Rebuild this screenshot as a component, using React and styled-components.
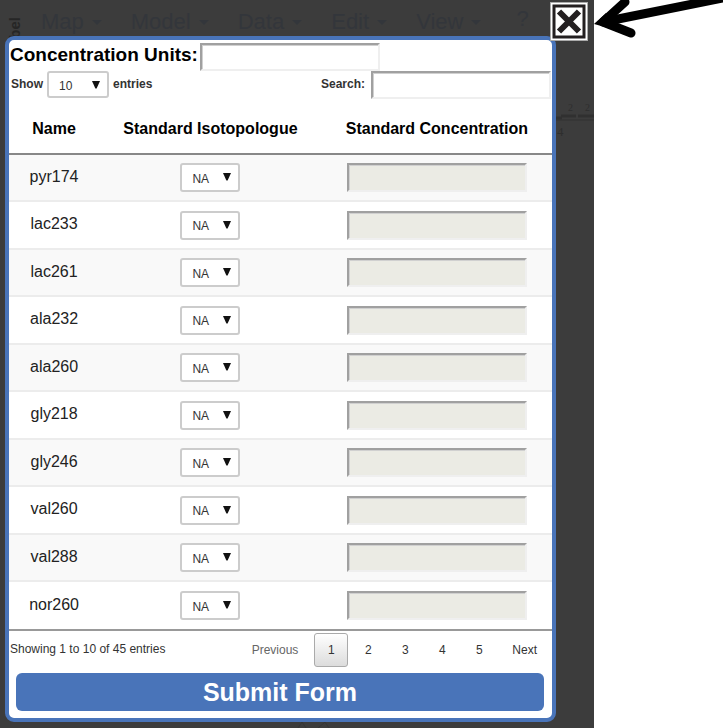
import React, { useState } from "react";
import styled, { createGlobalStyle } from "styled-components";

const GlobalStyle = createGlobalStyle`
  * { box-sizing: border-box; }
  body {
    margin: 0;
    background: #fff;
    color: #222;
    font-family: "Liberation Sans", Arial, sans-serif;
  }
  button, input, select { font-family: inherit; margin: 0; }
`;

const Page = styled.div`
  position: relative;
  display: grid;
  grid-template-columns: minmax(0, 1fr) 129px;
  min-height: 100vh;
`;

const Backdrop = styled.div`
  position: relative;
  background: #3c3c3c;
  padding: 0 38px 6px 5px;
`;

const MenuBar = styled.nav`
  display: flex;
  align-items: flex-end;
  height: 36px;
  color: #33363b;
`;

const SideLabel = styled.span`
  align-self: flex-start;
  writing-mode: vertical-rl;
  transform: rotate(180deg);
  width: 20px;
  margin: 17px 16px 0 0;
  font-size: 15px;
  font-weight: bold;
  line-height: 20px;
  color: #262626;
`;

const MenuButton = styled.button`
  display: flex;
  align-items: center;
  gap: 8px;
  height: 28px;
  margin-right: 29px;
  padding: 0;
  border: 0;
  background: none;
  color: inherit;
  font-size: 22px;
  line-height: 28px;

  &:last-child {
    height: 34px;
    margin: 0 0 0 6px;
  }
`;

const Caret = styled.i`
  border: 5px solid transparent;
  border-top-color: currentColor;
  border-bottom: 0;
`;

const MapFragment = styled.svg`
  position: absolute;
  top: 98px;
  right: 0;
`;

const BottomMark = styled.svg`
  position: absolute;
  bottom: 0;
  left: 296px;
`;

const Dialog = styled.form`
  position: relative;
  border: 4px solid #4974b9;
  border-radius: 9px;
  background: #fff;
`;

const CloseButton = styled.button`
  position: absolute;
  top: -38px;
  right: -36px;
  width: 38px;
  height: 39px;
  padding: 0;
  border: 0;
  background: none;
  svg { display: block; }
`;

const UnitsRow = styled.div`
  display: flex;
  align-items: center;
  gap: 2px;
  height: 31px;
  padding: 2px 0 0 1px;
`;

const UnitsLabel = styled.label`
  color: #000;
  font-size: 19px;
  font-weight: bold;
  line-height: 24px;
  padding-bottom: 4px;
`;

const TextField = styled.input`
  width: 180px;
  height: ${(p) => p.$height || 28}px;
  padding: 0 6px;
  border: 2px solid;
  border-color: #a0a0a0 #efefef #efefef #a0a0a0;
  border-radius: 0;
  background: ${(p) => (p.disabled ? "#ebebe4" : "#fff")};
  box-shadow: inset 1px 1px #d0d0d0;
  font-size: 13px;
  outline: 0;
`;

const ControlRow = styled.div`
  display: flex;
  justify-content: space-between;
  height: 27px;
  padding: 0 1px 0 2px;
  font-size: 12px;
  font-weight: bold;
  line-height: 27px;
  color: #333;
`;

const ControlLabel = styled.label`
  display: flex;
  gap: ${(p) => p.$gap}px;
`;

const SelectBox = styled.span`
  position: relative;
  display: inline-block;
  vertical-align: top;
  width: ${(p) => p.$width}px;
  height: ${(p) => p.$height}px;
  svg {
    position: absolute;
    top: 9px;
    right: 9px;
    pointer-events: none;
  }
`;

const Select = styled.select`
  appearance: none;
  display: block;
  width: 100%;
  height: 100%;
  padding: 2px 20px 0 10px;
  border: 2px solid #ccc;
  border-radius: 3px;
  background: #fff;
  color: #333;
  font-size: 12px;
`;

const Table = styled.table`
  width: 100%;
  table-layout: fixed;
  border-collapse: separate;
  border-spacing: 0;
  border-bottom: 2px solid #999;
  color: #000;
  text-align: center;
`;

const HeadCell = styled.th`
  width: ${(p) => p.$width};
  height: 57px;
  padding: 7px 0 0;
  border-bottom: 2px solid #888;
  font-size: 16px;
  line-height: 20px;
  white-space: nowrap;
`;

const Row = styled.tr`
  height: 47px;
  &:nth-child(odd) { background: #f9f9f9; }
  &:nth-child(even):not(:last-child) { height: 48px; }
  &:not(:last-child) td { border-bottom: 2px solid #ececec; }
`;

const Cell = styled.td`
  padding: 0;
  color: #222;
  font-size: 16px;
  line-height: 20px;
  vertical-align: middle;
`;

const NameCell = styled(Cell)`
  padding-bottom: 2px;
`;

const ControlCell = styled(Cell)`
  input { display: block; margin: 0 auto; }
`;

const Footer = styled.div`
  display: flex;
  justify-content: space-between;
  align-items: center;
  padding: 2px 2px 6px 1px;
  font-size: 12px;
  color: #333;
`;

const Status = styled.span`
  padding-bottom: 2px;
`;

const Pager = styled.div`
  display: flex;
  gap: 3px;
`;

const PageButton = styled.button`
  min-width: 34px;
  height: 34px;
  padding: 0 12px;
  border: 1px solid ${(p) => (p.$current ? "#aaa" : "transparent")};
  border-radius: 3px;
  background: ${(p) => (p.$current ? "linear-gradient(#fff, #dcdcdc)" : "none")};
  color: ${(p) => (p.disabled ? "#666" : "#333")};
  font-size: 12px;
`;

const SubmitBar = styled.div`
  padding: 0 8px 7px 7px;
`;

const Submit = styled.button`
  display: block;
  width: 100%;
  height: 38px;
  padding: 0;
  border: 0;
  border-radius: 6px;
  background: #4974b9;
  color: #fff;
  font-size: 25px;
  font-weight: bold;
  line-height: 36px;
`;

const Pointer = styled.svg`
  position: absolute;
  top: 0;
  right: 0;
  pointer-events: none;
`;

const menus = ["Map", "Model", "Data", "Edit", "View"];
const names = [
  "pyr174", "lac233", "lac261", "ala232", "ala260",
  "gly218", "gly246", "val260", "val288", "nor260",
];

function DropDown({ id, label, width, height, options }) {
  return (
    <SelectBox $width={width} $height={height}>
      <Select id={id} aria-label={label}>
        {options.map((o) => <option key={o}>{o}</option>)}
      </Select>
      <svg width="8" height="9" viewBox="0 0 8 9" aria-hidden="true">
        <path d="M0 1h8L4.6 8.5H3.4z" fill="#111" />
      </svg>
    </SelectBox>
  );
}

export default function App() {
  const [page, setPage] = useState(1);
  return (
    <Page>
      <GlobalStyle />
      <Backdrop>
        <MenuBar>
          <SideLabel>bel</SideLabel>
          {menus.map((name) => (
            <MenuButton key={name} type="button">
              {name}<Caret />
            </MenuButton>
          ))}
          <MenuButton type="button" aria-label="Help">?</MenuButton>
        </MenuBar>
        <MapFragment width="38" height="40" aria-hidden="true">
          <path d="M0 20H6M5 18h15M22 18h16" stroke="#303030" strokeWidth="3" />
          <path d="M0 22H38" stroke="#303030" strokeWidth="1" />
          <g fill="#2e2e2e" fontFamily="Liberation Serif, serif">
            <text x="12" y="13" fontSize="10">2</text>
            <text x="29" y="13" fontSize="10">2</text>
            <text x="1" y="38" fontSize="13">4</text>
          </g>
        </MapFragment>
        <BottomMark width="34" height="6" aria-hidden="true">
          <path d="M2 6 6 0M10 6 6 0M22 6 29 0 33 6" stroke="#353535" fill="none" />
        </BottomMark>
        <Dialog onSubmit={(e) => e.preventDefault()}>
          <CloseButton type="button" aria-label="Close">
            <svg width="38" height="39" viewBox="0 0 38 39">
              <path d="M0 0h38v39H0z" fill="#aaa" />
              <path d="M1 1h36v37H1z" fill="#fff" />
              <path d="M4 4h30v31H4z" fill="#fff" stroke="#231f20" strokeWidth="3" />
              <path d="M9 9.500 29 29.500M29 9.500 9 29.500" stroke="#231f20" strokeWidth="6" />
            </svg>
          </CloseButton>
          <UnitsRow>
            <UnitsLabel htmlFor="units">Concentration Units:</UnitsLabel>
            <TextField id="units" />
          </UnitsRow>
          <ControlRow>
            <ControlLabel $gap={4} htmlFor="length">
              <span>Show</span>
              <DropDown id="length" width={62} height={27} options={["10", "25", "50"]} />
              <span>entries</span>
            </ControlLabel>
            <ControlLabel $gap={6}>
              Search:
              <TextField type="search" />
            </ControlLabel>
          </ControlRow>
          <Table>
            <thead>
              <tr>
                <HeadCell $width="16.6%">Name</HeadCell>
                <HeadCell $width="41%">Standard Isotopologue</HeadCell>
                <HeadCell>Standard Concentration</HeadCell>
              </tr>
            </thead>
            <tbody>
              {names.map((name) => (
                <Row key={name}>
                  <NameCell>{name}</NameCell>
                  <ControlCell>
                    <DropDown label={`${name} standard isotopologue`} width={60} height={29} options={["NA"]} />
                  </ControlCell>
                  <ControlCell>
                    <TextField $height={29} disabled aria-label={`${name} standard concentration`} />
                  </ControlCell>
                </Row>
              ))}
            </tbody>
          </Table>
          <Footer>
            <Status>Showing 1 to 10 of 45 entries</Status>
            <Pager>
              <PageButton type="button" disabled={page === 1} onClick={() => setPage(page - 1)}>Previous</PageButton>
              {[1, 2, 3, 4, 5].map((n) => (
                <PageButton key={n} type="button" $current={n === page} onClick={() => setPage(n)}>{n}</PageButton>
              ))}
              <PageButton type="button" disabled={page === 5} onClick={() => setPage(page + 1)}>Next</PageButton>
            </Pager>
          </Footer>
          <SubmitBar>
            <Submit type="submit">Submit Form</Submit>
          </SubmitBar>
        </Dialog>
      </Backdrop>
      <Pointer width="131" height="40" viewBox="592 0 131 40" aria-hidden="true">
        <path d="M728 -3 603 22" stroke="#000" strokeWidth="9" />
        <path d="M625 2 603 22 631 33" stroke="#000" strokeWidth="9" strokeLinecap="round" strokeLinejoin="round" fill="none" />
        <path d="M594 24 606 13 612 29z" />
      </Pointer>
    </Page>
  );
}
